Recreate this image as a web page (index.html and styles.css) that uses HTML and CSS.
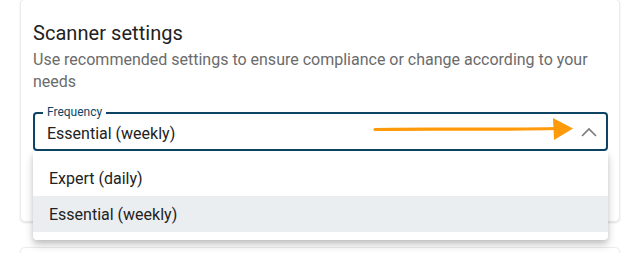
FILE: index.html
```html
<!DOCTYPE html>
<html>
<head>
<meta charset="utf-8">
<link rel="stylesheet" href="styles.css">
</head>
<body>
<div class="page">
  <section class="card">
    <h2 class="title">Scanner settings</h2>
    <p class="subtitle">Use recommended settings to ensure compliance or change according to your needs</p>
    <div class="field">
      <span class="label">Frequency</span>
      <span class="value">Essential (weekly)</span>
      <svg class="chevron" width="16" height="10" viewBox="0 0 16 10"><polyline points="1,9 8,2 15,9" fill="none" stroke="#7a7a7a" stroke-width="1.6"/></svg>
      <svg class="annot" width="210" height="26" viewBox="0 0 210 26"><path d="M2 13.5 C60 12.5 120 14 184 12.5" fill="none" stroke="#ff9a0a" stroke-width="3.2" stroke-linecap="round"/><polygon points="180,2 200,12.5 181,24" fill="#ff9a0a"/></svg>
      <ul class="menu">
        <li class="item">Expert (daily)</li>
        <li class="item active">Essential (weekly)</li>
      </ul>
    </div>
  </section>
  <section class="card next"></section>
</div>
</body>
</html>
```
FILE: styles.css
```css
* { box-sizing: border-box; }
html, body { margin: 0; padding: 0; background: #ffffff; }
body { font-family: Roboto, "Noto Sans", Arial, sans-serif; overflow: hidden; width: 635px; height: 253px; }
.page { padding: 0 15px 0 20px; height: 253px; overflow: hidden; }
.card {
  width: 600px;
  height: 223px;
  margin-top: -1px;
  border: 1px solid #ececec;
  border-radius: 5px;
  box-shadow: 0 1px 2px rgba(0,0,0,0.12);
  padding: 19px 12px 0 12px;
  background: #fff;
}
.card.next { height: 20px; margin-top: 25px; }
.title { margin: 0; font-size: 20px; font-weight: 400; line-height: 28px; color: #222; letter-spacing: 0.05px; }
.subtitle { margin: 2px 0 0 0; font-size: 16px; line-height: 22px; color: #6b6b6b; width: 580px; }
.field {
  position: relative;
  margin-top: 19px;
  width: 575px;
  height: 39px;
  border: 2px solid #0d4463;
  border-radius: 4px;
  display: flex;
  align-items: center;
  padding: 0 10px 0 12px;
}
.label {
  position: absolute;
  top: -9px;
  left: 8px;
  padding: 0 4px;
  background: #fff;
  font-size: 12px;
  line-height: 14px;
  color: #0d4463;
}
.value { flex: 1; font-size: 16px; color: #222; padding-top: 3px; }
.chevron { margin-right: -1px; margin-top: 1px; }
.annot { position: absolute; left: 338px; top: 2px; }
.menu {
  position: absolute;
  left: -2px;
  top: 37px;
  width: 575px;
  margin: 0;
  padding: 9px 0 8px 0;
  list-style: none;
  background: #fff;
  border-radius: 0 0 4px 4px;
  box-shadow: 0 5px 8px rgba(0,0,0,0.2), 0 2px 4px rgba(0,0,0,0.08);
}
.item { height: 36px; line-height: 37px; padding-left: 16px; font-size: 16px; color: #222; }
.item.active { background: #eaeef1; }
```
